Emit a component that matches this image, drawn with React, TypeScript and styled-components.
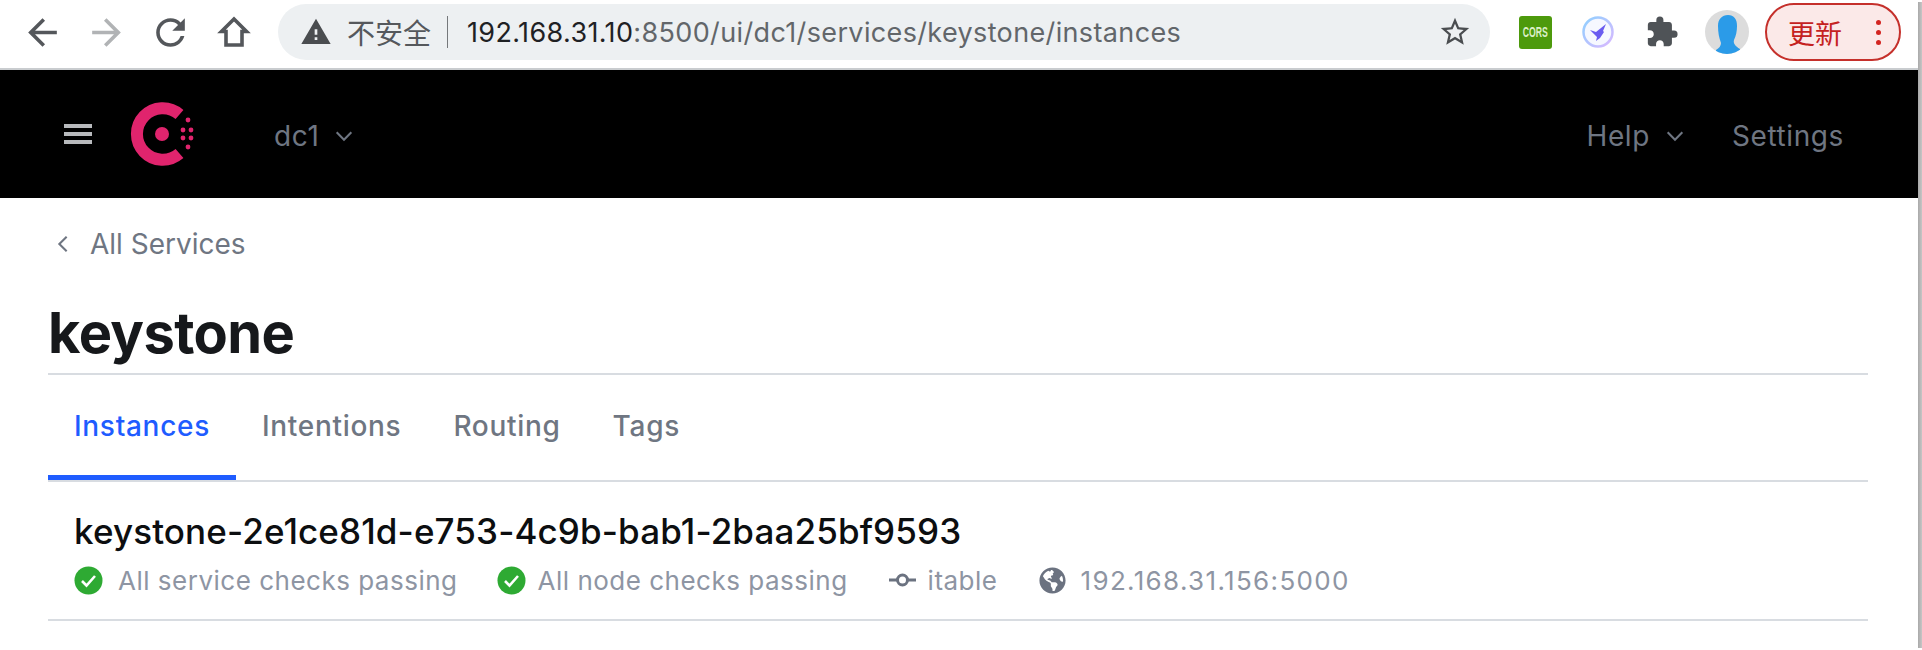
import React from 'react';
import styled, { createGlobalStyle } from 'styled-components';
import {
  MdArrowBack,
  MdArrowForward,
  MdRefresh,
  MdWarning,
  MdStarBorder,
  MdExtension,
} from 'react-icons/md';
import { FaGlobeAmericas } from 'react-icons/fa';

const GlobalStyle = createGlobalStyle`
  html, body {
    margin: 0;
    background: #fff;
    overflow: hidden;
    font-family: Inter, "Noto Sans CJK SC", sans-serif;
  }
`;

const Window = styled.div`
  display: flex;
  height: 650px;
`;

const Content = styled.div`
  flex: 1;
  min-width: 0;
`;

const WindowEdge = styled.div`
  flex: none;
  width: 4px;
  margin: 2px 0;
  background: linear-gradient(90deg, #a9a9a9, #c6c6c6);
`;

const Toolbar = styled.div`
  display: flex;
  align-items: center;
  height: 70px;
  box-sizing: border-box;
  padding: 0 0 4px 10px;
  background: #fff;
  border-bottom: 2px solid #c9cccf;
`;

const NavButton = styled.div<{ $color?: string }>`
  display: flex;
  align-items: center;
  justify-content: center;
  flex: none;
  width: 64px;
  color: ${p => p.$color ?? '#54575b'};
`;

const NavGroup = styled.div`
  display: flex;
  margin-right: 12px;
`;

const AddressBar = styled.div`
  display: flex;
  align-items: center;
  flex: none;
  width: 1212px;
  height: 56px;
  box-sizing: border-box;
  padding: 0 18px 0 22px;
  background: #edf0f2;
  border-radius: 28px;
  color: #4a4d50;
`;

const Insecure = styled.span`
  margin-left: 15px;
  font-size: 28px;
  color: #55585c;
`;

const Separator = styled.span`
  width: 1px;
  height: 32px;
  margin: 0 19px 0 16px;
  background: #75787b;
`;

const Url = styled.span`
  flex: 1;
  font-size: 27px;
  letter-spacing: 0.36px;
  color: #62666a;
  white-space: nowrap;
`;

const Host = styled.span`
  color: #1f2124;
`;

const Extensions = styled.div`
  display: flex;
  align-items: center;
  margin-left: 29px;
`;

const CorsBadge = styled.div`
  display: flex;
  align-items: center;
  justify-content: center;
  width: 33px;
  height: 33px;
  border-radius: 3px;
  background: #4d9a0c;
  color: #dcefc8;
`;

const CorsLabel = styled.span`
  font-family: "Liberation Sans", sans-serif;
  font-size: 14px;
  font-weight: 700;
  transform: scaleX(0.62);
`;

const ExtensionSlot = styled.div<{ $margin: number }>`
  display: flex;
  margin-left: ${p => p.$margin}px;
`;

const Avatar = styled.div`
  display: flex;
  align-items: flex-end;
  justify-content: center;
  width: 44px;
  height: 44px;
  border-radius: 50%;
  overflow: hidden;
  background: #dcdcdc;
`;

const UpdateButton = styled.div`
  display: flex;
  align-items: center;
  justify-content: space-between;
  width: 136px;
  height: 58px;
  box-sizing: border-box;
  margin-left: 16px;
  padding: 0 18px 0 21px;
  border: 2px solid #c5302b;
  border-radius: 29px;
  background: #fbe9e8;
  color: #c5221f;
  font-size: 27px;
`;

const Dots = styled.div`
  display: flex;
  flex-direction: column;
  gap: 5px;
`;

const Dot = styled.span`
  width: 5px;
  height: 5px;
  border-radius: 50%;
  background: #d32420;
`;

const Header = styled.header`
  display: flex;
  align-items: center;
  height: 128px;
  padding: 0 74px 0 64px;
  background: #000;
  color: #6f7682;
  font-size: 28px;
  letter-spacing: 0.6px;
`;

const Menu = styled.div`
  display: flex;
  flex-direction: column;
  gap: 4.5px;
  width: 28px;
  margin-right: 38px;
`;

const MenuBar = styled.span`
  height: 3.5px;
  background: #b8babd;
`;

const HeaderItem = styled.div<{ $margin?: number }>`
  display: flex;
  align-items: center;
  gap: 14px;
  padding-top: 4px;
  margin-left: ${p => p.$margin ?? 0}px;
`;

const Spacer = styled.div`
  flex: 1;
`;

const Main = styled.main`
  padding: 29px 50px 0 48px;
`;

const Crumb = styled.div`
  display: flex;
  align-items: center;
  gap: 16px;
  height: 34px;
  padding-left: 4px;
  color: #6f7682;
  font-size: 28px;
`;

const Title = styled.h1`
  display: flex;
  align-items: flex-end;
  height: 114px;
  box-sizing: border-box;
  margin: 0;
  padding-bottom: 7px;
  border-bottom: 2px solid #d8dce1;
  color: #16181b;
  font-size: 56px;
  font-weight: 700;
  line-height: 66px;
  letter-spacing: -0.6px;
`;

const Tabs = styled.nav`
  display: flex;
  height: 105px;
  border-bottom: 2px solid #d8dce1;
`;

const Tab = styled.div<{ $active?: boolean }>`
  display: flex;
  align-items: center;
  box-sizing: border-box;
  height: 105px;
  padding: 1px 26px 0;
  border-bottom: 5px solid ${p => (p.$active ? '#1f5cff' : 'transparent')};
  color: ${p => (p.$active ? '#1f5cff' : '#6f7682')};
  font-size: 28px;
  font-weight: 500;
  letter-spacing: 0.7px;
`;

const Instance = styled.div`
  height: 139px;
  box-sizing: border-box;
  padding: 28px 0 0 26px;
  border-bottom: 2px solid #d8dce1;
`;

const InstanceName = styled.div`
  color: #0c0e10;
  font-size: 35px;
  font-weight: 500;
  line-height: 42px;
  letter-spacing: 0.12px;
`;

const Meta = styled.div`
  display: flex;
  align-items: center;
  height: 34px;
  margin-top: 11px;
  color: #8e95a3;
  font-size: 26px;
  letter-spacing: 0.5px;
`;

const MetaItem = styled.div<{ $gap: number; $margin?: number }>`
  display: flex;
  align-items: center;
  gap: ${p => p.$gap}px;
  margin-left: ${p => p.$margin ?? 0}px;
`;

const Address = styled.span`
  letter-spacing: 1.35px;
`;

const Chevron = ({ size = 22, rotate = 0 }: { size?: number; rotate?: number }) => (
  <svg
    width={size}
    height={size}
    viewBox="0 0 18 18"
    fill="none"
    stroke="currentColor"
    strokeWidth="1.7"
    transform={`rotate(${rotate})`}
  >
    <path d="M3 6l6 6 6-6" />
  </svg>
);

const HomeIcon = () => (
  <svg width="34" height="34" viewBox="0 0 34 34" fill="none" stroke="currentColor" strokeWidth="3.6">
    <path d="M17 4L4.5 16.5H9V30H25V16.5H29.5Z" />
  </svg>
);

const CheckIcon = () => (
  <svg width="29" height="29" viewBox="0 0 29 29">
    <circle cx="14.5" cy="14.5" r="14" fill="#2eaa33" />
    <path d="M8 15l4.5 4.5L21 10" fill="none" stroke="#fff" strokeWidth="2.6" />
  </svg>
);

const CommitIcon = () => (
  <svg width="27" height="14" viewBox="0 0 27 14" fill="none" stroke="#6b7280" strokeWidth="3">
    <circle cx="13.5" cy="7" r="5" />
    <path d="M0 7h8M19 7h8" />
  </svg>
);

const ConsulLogo = () => (
  <svg width="66" height="66" viewBox="0 0 66 66" fill="#e0246d">
    <path d="M49.5 13.5A25.75 25.75 0 1 0 49.5 52.5" fill="none" stroke="#e0246d" strokeWidth="12" />
    <circle cx="32" cy="33" r="7" />
    <circle cx="58" cy="19" r="2.4" />
    <circle cx="53" cy="29" r="2.4" />
    <circle cx="61" cy="29" r="2.4" />
    <circle cx="53" cy="37" r="2.4" />
    <circle cx="61" cy="37" r="2.4" />
    <circle cx="58" cy="46" r="2.4" />
  </svg>
);

const BirdIcon = () => (
  <svg width="34" height="34" viewBox="0 0 34 34">
    <defs>
      <linearGradient id="birdRing" x1="0" y1="0" x2="1" y2="1">
        <stop offset="0" stopColor="#8fd0ff" />
        <stop offset="1" stopColor="#d9b8ff" />
      </linearGradient>
    </defs>
    <circle cx="17" cy="17" r="14.5" fill="#f6f8ff" stroke="url(#birdRing)" strokeWidth="2.5" />
    <path d="M25 9l-3 7 1 1-4 6-4 3 1-4-7-7 6 2z" fill="#6a5cf0" />
  </svg>
);

const PersonIcon = () => (
  <svg width="26" height="40" viewBox="0 0 26 40" fill="#2b9be8">
    <path d="M4 12C4 5 8 1 14 1s9 4 9 11c0 5-1 10-3 14-1 3 1 6 6 9v5H2v-4c3-2 5-4 5-7-2-5-3-11-3-17z" />
  </svg>
);

export default function App() {
  return (
    <Window>
      <GlobalStyle />
      <Content>
        <Toolbar>
          <NavGroup>
            <NavButton><MdArrowBack size={43} /></NavButton>
            <NavButton $color="#b1b3b5"><MdArrowForward size={43} /></NavButton>
            <NavButton><MdRefresh size={43} /></NavButton>
            <NavButton><HomeIcon /></NavButton>
          </NavGroup>
          <AddressBar>
            <MdWarning size={32} />
            <Insecure>不安全</Insecure>
            <Separator />
            <Url>
              <Host>192.168.31.10</Host>:8500/ui/dc1/services/keystone/instances
            </Url>
            <MdStarBorder size={34} />
          </AddressBar>
          <Extensions>
            <CorsBadge><CorsLabel>CORS</CorsLabel></CorsBadge>
            <ExtensionSlot $margin={29}><BirdIcon /></ExtensionSlot>
            <ExtensionSlot $margin={30}><MdExtension size={34} color="#4f5357" /></ExtensionSlot>
            <ExtensionSlot $margin={26}>
              <Avatar><PersonIcon /></Avatar>
            </ExtensionSlot>
          </Extensions>
          <UpdateButton>
            更新
            <Dots><Dot /><Dot /><Dot /></Dots>
          </UpdateButton>
        </Toolbar>

        <Header>
          <Menu><MenuBar /><MenuBar /><MenuBar /></Menu>
          <ConsulLogo />
          <HeaderItem $margin={78}>dc1 <Chevron /></HeaderItem>
          <Spacer />
          <HeaderItem>Help <Chevron /></HeaderItem>
          <HeaderItem $margin={46}>Settings</HeaderItem>
        </Header>

        <Main>
          <Crumb><Chevron rotate={90} /> All Services</Crumb>
          <Title>keystone</Title>
          <Tabs>
            <Tab $active>Instances</Tab>
            <Tab>Intentions</Tab>
            <Tab>Routing</Tab>
            <Tab>Tags</Tab>
          </Tabs>
          <Instance>
            <InstanceName>keystone-2e1ce81d-e753-4c9b-bab1-2baa25bf9593</InstanceName>
            <Meta>
              <MetaItem $gap={15}><CheckIcon /> All service checks passing</MetaItem>
              <MetaItem $gap={12} $margin={39}><CheckIcon /> All node checks passing</MetaItem>
              <MetaItem $gap={12} $margin={41}><CommitIcon /> itable</MetaItem>
              <MetaItem $gap={15} $margin={41}>
                <FaGlobeAmericas size={27} color="#6b7280" /> <Address>192.168.31.156:5000</Address>
              </MetaItem>
            </Meta>
          </Instance>
        </Main>
      </Content>
      <WindowEdge />
    </Window>
  );
}
